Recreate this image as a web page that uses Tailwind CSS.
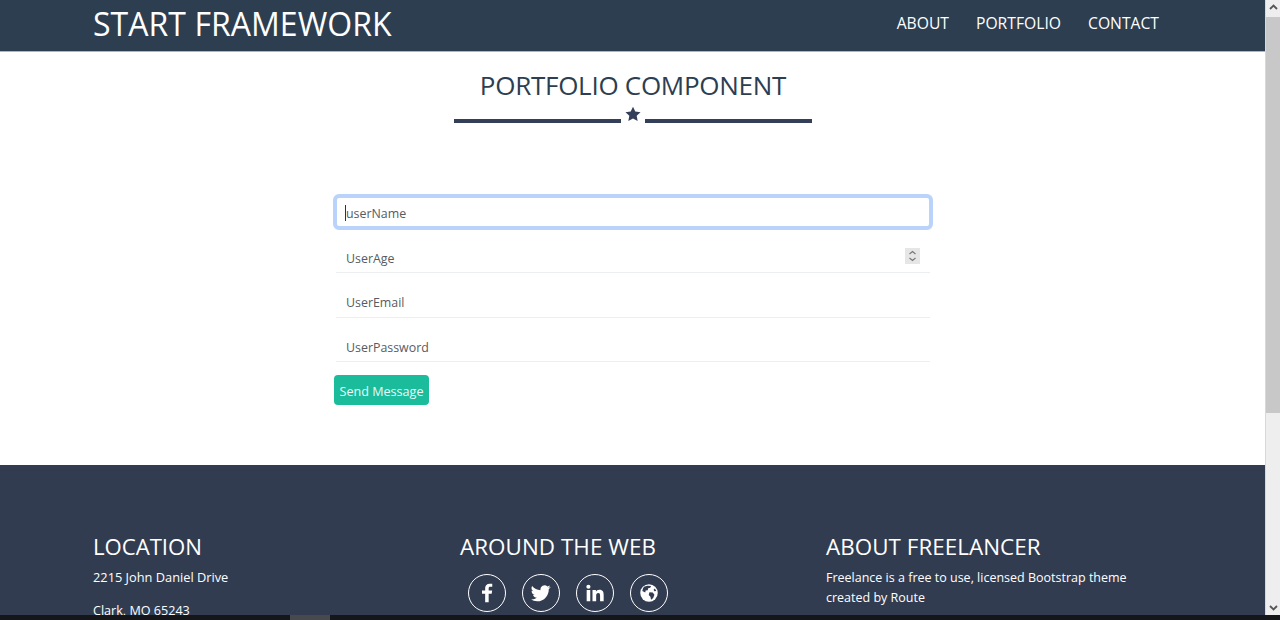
<!DOCTYPE html>
<html lang="en">
<head>
  <meta charset="UTF-8" />
  <title>Start Framework</title>
  <script src="https://cdn.jsdelivr.net/npm/@tailwindcss/browser@4"></script>
</head>
<body class="h-[620px] overflow-hidden flex flex-col bg-white font-['Open_Sans',sans-serif]">
  <div class="flex h-[615px] overflow-hidden">
    <div class="w-[1266px] shrink-0 flex flex-col">
      <!-- navbar -->
      <nav class="h-[52px] shrink-0 bg-[#2c3e50] border-b border-[#a9b8c6] flex items-center justify-between pl-[93px] pr-[107px] pb-[3px]">
        <a class="text-[32px] leading-[48px] text-white tracking-[0.05px]">START FRAMEWORK</a>
        <ul class="flex gap-[27px] text-[15.7px] text-white">
          <li>ABOUT</li>
          <li>PORTFOLIO</li>
          <li>CONTACT</li>
        </ul>
      </nav>

      <!-- form section -->
      <section class="h-[413px] shrink-0 flex flex-col items-center">
        <h2 class="mt-[15px] text-[26px] leading-[36px] text-[#2c3e50] tracking-[-0.27px]">PORTFOLIO COMPONENT</h2>
        <div class="mt-[2px] flex items-center gap-[4px] h-[20px]">
          <span class="w-[167px] h-[4px] bg-[#34405a] mt-[12px]"></span>
          <svg class="w-[16px] h-[16px] mb-[3px]" viewBox="0 0 24 24" fill="#34405a"><path d="M12 1l3.400 7.300 7.900 1-5.800 5.400 1.500 7.900-7-3.900-7 3.900 1.500-7.900L.7 9.300l7.900-1z"/></svg>
          <span class="w-[167px] h-[4px] bg-[#34405a] mt-[12px]"></span>
        </div>
        <form class="mt-[70px] w-[598px] text-[12.4px] text-[#555c63]">
          <div class="-mt-[1px] -mx-[1px] h-[36px] rounded-[6px] border-[4px] border-[#b9d3fb] flex items-center pl-[8px] pt-[4px]">
            <span class="w-px h-[16px] bg-[#333] -mt-[2px]"></span><span>userName</span>
          </div>
          <div class="mt-[9px] mx-[2px] h-[34px] border-b border-[#eceeef] flex items-center justify-between pl-[10px] pr-[10px] pt-[8px]">
            <span>UserAge</span>
            <span class="w-[15px] h-[16px] bg-[#e6e6e6] flex items-center justify-center -mt-[8px]">
              <svg class="w-[9px] h-[12px]" viewBox="0 0 9 12" fill="none" stroke="#777" stroke-width="1.100"><path d="M1.500 4L4.500 1.500 7.500 4M1.500 8l3 2.500 3-2.500"/></svg>
            </span>
          </div>
          <div class="mt-[8px] mx-[2px] h-[37px] border-b border-[#eceeef] flex items-center pl-[10px] pt-[9px]">UserEmail</div>
          <div class="mt-[7px] mx-[2px] h-[37px] border-b border-[#eceeef] flex items-center pl-[10px] pt-[10px]">UserPassword</div>
          <button type="button" class="mt-[13px] block w-[95px] h-[30px] rounded-[4px] bg-[#1abc9c] text-[12.6px] text-[#e8fbf6] text-center pt-[4px]">Send Message</button>
        </form>
      </section>

      <!-- footer -->
      <footer class="flex-1 bg-[#323c50] text-white pl-[93px] pt-[66px] grid grid-cols-[367px_366px_340px] content-start">
        <div>
          <h4 class="text-[22.2px] leading-[31px] tracking-[-0.05px]">LOCATION</h4>
          <p class="mt-[5px] text-[12.8px] leading-[20px]">2215 John Daniel Drive</p>
          <p class="mt-[14px] text-[12.6px] leading-[20px]">Clark, MO 65243</p>
        </div>
        <div>
          <h4 class="text-[22.4px] leading-[31px] tracking-[0.05px]">AROUND THE WEB</h4>
          <div class="mt-[12px] ml-[8px] flex gap-[16px]">
            <span class="w-[38px] h-[38px] rounded-full border border-white flex items-center justify-center">
              <svg class="w-[20px] h-[20px]" viewBox="0 0 24 24" fill="#fff"><path d="M14 23v-10h3.600l.6-4H14V6.500c0-1.200.4-2 2-2h2.300V1c-.4-.1-1.700-.2-3.200-.2C12 .8 9.800 2.700 9.800 6.100V9H6v4h3.800v10z"/></svg>
            </span>
            <span class="w-[38px] h-[38px] rounded-full border border-white flex items-center justify-center">
              <svg class="w-[20px] h-[20px]" viewBox="0 0 24 24" fill="#fff"><path d="M23.500 4.900c-.9.400-1.800.7-2.800.8 1-.6 1.800-1.600 2.100-2.700-.9.600-2 1-3.100 1.200a4.900 4.900 0 0 0-8.300 4.400C7.400 8.400 3.800 6.500 1.400 3.500a4.900 4.900 0 0 0 1.500 6.500c-.8 0-1.500-.2-2.200-.6v.1c0 2.400 1.700 4.400 3.900 4.800-.7.200-1.500.2-2.200.1.600 1.900 2.400 3.300 4.600 3.400a9.800 9.800 0 0 1-7.200 2 13.800 13.800 0 0 0 7.500 2.200c9 0 14-7.500 14-14v-.6c1-.7 1.800-1.600 2.500-2.500z"/></svg>
            </span>
            <span class="w-[38px] h-[38px] rounded-full border border-white flex items-center justify-center">
              <svg class="w-[20px] h-[20px]" viewBox="0 0 24 24" fill="#fff"><path d="M2 8.500h4.300V22H2zM4.100 2a2.500 2.500 0 1 1 0 5 2.500 2.500 0 0 1 0-5zM9 8.500h4.100v1.900c.6-1.100 2-2.200 4.100-2.200 4.400 0 5.200 2.800 5.200 6.500V22h-4.300v-6.500c0-1.600 0-3.600-2.200-3.600s-2.500 1.700-2.500 3.500V22H9z"/></svg>
            </span>
            <span class="w-[38px] h-[38px] rounded-full border border-white flex items-center justify-center">
              <svg class="w-[20px] h-[20px]" viewBox="0 0 24 24"><circle cx="12" cy="12" r="10.500" fill="#fff"/><path d="M6 4.500l4-1.300 4.500.5-1 2-2.500.7-.5 2.300-2.500.3-.5 2.500-3.500-2c.3-2 1-3.700 2-5zM12.500 11l4 .5 2 2.500-1.500 4-2.500 2-.8-3.500-2-2zM19 6.500l1.800 3-2.300.5-1-2z" fill="#323c50"/></svg>
            </span>
          </div>
        </div>
        <div>
          <h4 class="text-[22.4px] leading-[31px] tracking-[0.05px]">ABOUT FREELANCER</h4>
          <p class="mt-[6px] text-[12.5px] leading-[20px] w-[320px]">Freelance is a free to use, licensed Bootstrap theme created by Route</p>
        </div>
      </footer>
    </div>

    <!-- scrollbar -->
    <div class="w-[14px] shrink-0 bg-[#eeeeee] flex flex-col items-center justify-between py-[4px] relative shadow-[-1px_0_0_#d5d8dc]">
      <div class="absolute left-0 right-0 top-[17px] h-[396px] bg-[#c8c8c8]"></div>
      <svg class="w-[9px] h-[6px]" viewBox="0 0 9 6" fill="none" stroke="#555" stroke-width="1.800"><path d="M1 5l3.500-3.500L8 5"/></svg>
      <svg class="w-[9px] h-[6px]" viewBox="0 0 9 6" fill="none" stroke="#555" stroke-width="1.800"><path d="M1 1l3.500 3.500L8 1"/></svg>
    </div>
  </div>

  <!-- strip of desktop below the window -->
  <div class="h-[5px] bg-[#15161a] pl-[290px]">
    <div class="w-[40px] h-[5px] bg-[#48494d]"></div>
  </div>
</body>
</html>
